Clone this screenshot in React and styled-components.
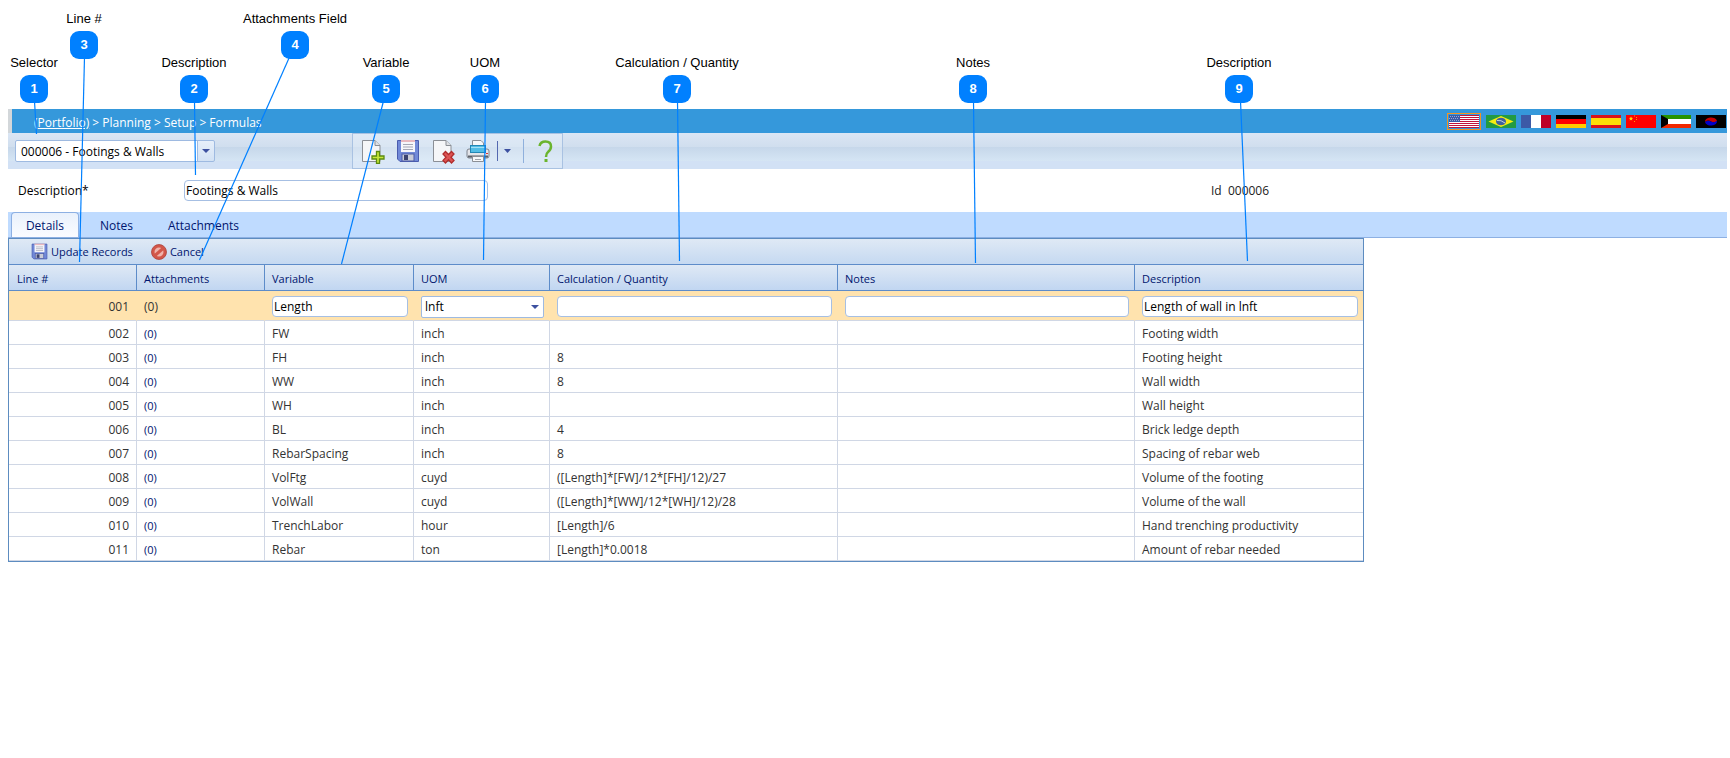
import React from "react";
import styled, { createGlobalStyle } from "styled-components";

const GlobalStyle = createGlobalStyle`
  * {
    box-sizing: border-box;
  }

  body {
    margin: 0;
    background: #fff;
    color: #000;
    font-family: "Open Sans", "Noto Sans", sans-serif;
    font-size: 12px;
  }

  input, select, button {
    font: inherit;
    color: inherit;
  }
`;

const Page = styled.div`
  position: relative;
  padding: 109px 3px 40px 8px;
`;

const TitleBar = styled.header`
  display: flex;
  align-items: center;
  justify-content: space-between;
  height: 24px;
  padding: 0 1px 0 22px;
  border-left: 4px solid #d3d7da;
  background: #3598db;
  color: #fff;
`;

const Breadcrumb = styled.nav`
  padding-top: 2px;

  a {
    color: #fff;
  }
`;

const Flags = styled.div`
  display: flex;
  align-items: center;
  gap: 5px;
`;

const FlagButton = styled.button`
  display: block;
  padding: ${(p) => (p.$active ? "1px" : "0")};
  border: ${(p) => (p.$active ? "1px solid #f7931e" : "0")};
  background: none;
  cursor: pointer;

  svg {
    display: block;
  }
`;

const ToolBar = styled.div`
  display: flex;
  align-items: flex-start;
  height: 36px;
  padding-left: 7px;
  background: linear-gradient(
    #dbe6f4 0,
    #d0deee 14px,
    #c6d7ea 14px,
    #d5e5f4 28px,
    #d2e1f5 28px,
    #d2e1f5 100%
  );
`;

const SelectWrap = styled.div`
  position: relative;
  width: ${(p) => p.$width || "100%"};
  margin-top: ${(p) => p.$top || "0"};

  &::after {
    content: "";
    position: absolute;
    top: 9px;
    right: 5px;
    border: 4px solid transparent;
    border-top-color: #3c50a0;
    border-bottom: 0;
    pointer-events: none;
  }
`;

const Select = styled.select`
  display: block;
  width: 100%;
  height: 22px;
  padding: 0 20px 0 ${(p) => (p.$split ? "5px" : "3px")};
  border: 1px solid #9ebae1;
  border-radius: 2px;
  appearance: none;
  background: ${(p) =>
    p.$split
      ? "linear-gradient(#9ebae1, #9ebae1) right 16px top 0 / 1px 100% no-repeat, linear-gradient(#e6effa, #d3e2f4) right / 16px 100% no-repeat, #fff"
      : "#fff"};
`;

const ToolGroup = styled.div`
  display: flex;
  align-items: center;
  height: 36px;
  margin-left: 137px;
  padding: 0 8px;
  border: 1px solid #a9c2e2;
  background: rgba(235, 243, 252, 0.35);
`;

const IconButton = styled.button`
  display: flex;
  padding: 0;
  margin-right: ${(p) => p.$gap || "11px"};
  border: 0;
  background: none;
  cursor: pointer;
`;

const Divider = styled.span`
  width: 1px;
  height: ${(p) => (p.$light ? "24px" : "20px")};
  margin-right: ${(p) => (p.$light ? "14px" : "5px")};
  background: ${(p) => (p.$light ? "#8fb0dc" : "#5468b0")};
`;

const FormRow = styled.div`
  display: flex;
  align-items: center;
  height: 43px;
  padding-left: 10px;
`;

const FormLabel = styled.label`
  width: 166px;
`;

const Input = styled.input`
  display: block;
  width: ${(p) => p.$width || "100%"};
  height: 21px;
  padding: 0 1px;
  border: 1px solid #a6bfe3;
  border-radius: 4px;
  background: #fff;
`;

const RecordId = styled.div`
  margin-left: 723px;
  color: #222;
  white-space: pre;
`;

const TabStrip = styled.div`
  display: flex;
  align-items: flex-end;
  height: 26px;
  padding-left: 3px;
  border-bottom: 1px solid #8db0e3;
  background: #bfdbff;
`;

const Tab = styled.button`
  height: 25px;
  padding: 1px 0 0;
  width: ${(p) => p.$width};
  border: 1px solid ${(p) => (p.$active ? "#8db0e3" : "transparent")};
  border-bottom: 0;
  border-radius: 4px 4px 0 0;
  background: ${(p) => (p.$active ? "linear-gradient(#e9f1fc, #fafcff)" : "none")};
  color: #00156e;
  cursor: pointer;
`;

const Grid = styled.div`
  width: fit-content;
  border: 1px solid #5d8cc0;
`;

const CommandRow = styled.div`
  display: flex;
  align-items: center;
  height: 25px;
  padding-left: 22px;
  gap: 18px;
  background: linear-gradient(#dfe9f5, #c5d9f1);
`;

const CommandButton = styled.button`
  display: flex;
  align-items: center;
  gap: 3px;
  padding: 0;
  border: 0;
  background: none;
  color: #00156e;
  font-size: 11px;
  cursor: pointer;
`;

const Table = styled.table`
  width: 1354px;
  table-layout: fixed;
  border-collapse: separate;
  border-spacing: 0;

  th {
    height: 27px;
    padding: 2px 0 0 7px;
    border: solid #5d8cc9;
    border-width: 1px 1px 1px 0;
    background: linear-gradient(#dfe9f5, #c1d6f1);
    color: #00156e;
    font-size: 11px;
    font-weight: 400;
    text-align: left;
  }

  th:first-child {
    padding-left: 8px;
  }

  td {
    height: 24px;
    padding: 2px 0 0 7px;
    border: solid #d0d7e5;
    border-width: 0 1px 1px 0;
    color: #333;
    white-space: nowrap;
  }

  td:first-child {
    padding-right: 7px;
    text-align: right;
  }

  th:last-child,
  td:last-child {
    border-right: 0;
  }
`;

const EditRow = styled.tr`
  && td {
    height: 30px;
    padding-right: 5px;
    border-right-color: #ffe3ae;
    background: #ffe3ae;
  }

  && td:first-child {
    padding-right: 7px;
  }

  input, select {
    color: #000;
  }
`;

const AttachLink = styled.a`
  color: #00156e;
  font-size: 11px;
  text-decoration: none;
`;

const Overlay = styled.div`
  position: absolute;
  top: 0;
  left: 0;
  pointer-events: none;
`;

const Lines = styled.svg`
  position: absolute;
  top: 0;
  left: 0;
`;

const Callout = styled.div`
  position: absolute;
  display: flex;
  flex-direction: column;
  align-items: center;
  width: 160px;
  gap: 4px;
  font-family: "Liberation Sans", Arial, sans-serif;
  font-size: 13px;
  line-height: 16px;
`;

const Badge = styled.span`
  display: flex;
  align-items: center;
  justify-content: center;
  width: 28px;
  height: 28px;
  margin-left: ${(p) => p.$shift * 2}px;
  border-radius: 9px;
  background: #0080ff;
  color: #fff;
  font-weight: 700;
`;

const callouts = [
  { n: 1, label: "Selector", x: 34, y: 55, end: [36, 134] },
  { n: 2, label: "Description", x: 194, y: 55, end: [195, 175] },
  { n: 3, label: "Line #", x: 84, y: 11, end: [79, 262] },
  { n: 4, label: "Attachments Field", x: 295, y: 11, from: 289, end: [199, 260] },
  { n: 5, label: "Variable", x: 386, y: 55, from: 383, end: [341, 264] },
  { n: 6, label: "UOM", x: 485, y: 55, end: [483, 260] },
  { n: 7, label: "Calculation / Quantity", x: 677, y: 55, end: [679, 261] },
  { n: 8, label: "Notes", x: 973, y: 55, end: [975, 263] },
  { n: 9, label: "Description", x: 1239, y: 55, from: 1240, end: [1247, 261] },
];

const columns = [
  { title: "Line #", width: 128 },
  { title: "Attachments", width: 128 },
  { title: "Variable", width: 149 },
  { title: "UOM", width: 136 },
  { title: "Calculation / Quantity", width: 288 },
  { title: "Notes", width: 297 },
  { title: "Description", width: 228 },
];

const rows = [
  ["002", "FW", "inch", "", "Footing width"],
  ["003", "FH", "inch", "8", "Footing height"],
  ["004", "WW", "inch", "8", "Wall width"],
  ["005", "WH", "inch", "", "Wall height"],
  ["006", "BL", "inch", "4", "Brick ledge depth"],
  ["007", "RebarSpacing", "inch", "8", "Spacing of rebar web"],
  ["008", "VolFtg", "cuyd", "([Length]*[FW]/12*[FH]/12)/27", "Volume of the footing"],
  ["009", "VolWall", "cuyd", "([Length]*[WW]/12*[WH]/12)/28", "Volume of the wall"],
  ["010", "TrenchLabor", "hour", "[Length]/6", "Hand trenching productivity"],
  ["011", "Rebar", "ton", "[Length]*0.0018", "Amount of rebar needed"],
];

const flags = [
  {
    name: "English",
    art: (
      <>
        <rect width="30" height="13" fill="#fff" />
        {[0, 2, 4, 6, 8, 10, 12].map((y) => (
          <rect key={y} y={y} width="30" height="1" fill="#c0143c" />
        ))}
        <rect width="11" height="7" fill="#3a5ba8" />
        <path
          d="M1 1.5h10M0 3.5h10M1 5.5h10"
          stroke="#93a9d6"
          strokeDasharray="1 1"
        />
      </>
    ),
  },
  {
    name: "Português",
    art: (
      <>
        <rect width="30" height="13" fill="#229a44" />
        <path d="M2.5 6.5 15 1l12.5 5.5L15 12z" fill="#f7ec13" />
        <ellipse cx="15" cy="6.5" rx="5" ry="3.8" fill="#41609c" />
        <path d="M11 5.5q4-.8 8 2.5" stroke="#c3d3e0" fill="none" />
      </>
    ),
  },
  {
    name: "Français",
    art: (
      <>
        <rect width="10" height="13" fill="#3c5aa6" />
        <rect x="10" width="10" height="13" fill="#fff" />
        <rect x="20" width="10" height="13" fill="#be0027" />
      </>
    ),
  },
  {
    name: "Deutsch",
    art: (
      <>
        <rect width="30" height="4" fill="#000" />
        <rect y="4" width="30" height="5" fill="#f00" />
        <rect y="9" width="30" height="4" fill="#fc0" />
      </>
    ),
  },
  {
    name: "Español",
    art: (
      <>
        <rect width="30" height="13" fill="#da121a" />
        <rect y="3" width="30" height="7" fill="#fcdd09" />
      </>
    ),
  },
  {
    name: "中文",
    art: (
      <>
        <rect width="30" height="13" fill="#fe0000" />
        <path d="M5 1.5l.6 1.3 1.4.2-1 1 .2 1.5-1.2-.7-1.3.7.3-1.5-1-1 1.4-.2z" fill="#ffde00" />
        <path d="M8 .5h1v1H8zM10 2h1v1h-1zM10 4h1v1h-1zM8 6h1v1H8z" fill="#ff9a00" />
      </>
    ),
  },
  {
    name: "العربية",
    art: (
      <>
        <rect width="30" height="4" fill="#279300" />
        <rect y="4" width="30" height="5" fill="#fff" />
        <rect y="9" width="30" height="4" fill="#f02800" />
        <path d="M0 0l7 4v5l-7 4z" fill="#000" />
      </>
    ),
  },
  {
    name: "한국어",
    art: (
      <>
        <rect width="30" height="13" fill="#000" />
        <path d="M9 7a6 4 0 0 1 12-1q-3 2.5-6 .5T9 7z" fill="#c60000" />
        <path d="M21 6a6 4 0 0 1-12 1q3-2 6-.5T21 6z" fill="#0000c8" />
      </>
    ),
  },
];

function PageShape() {
  return (
    <>
      <path d="M1.5 1.5H14l5 5v16H1.5z" fill="#f5f6f8" stroke="#8b8f96" />
      <path d="M14 1.5v5h5" fill="#dfe1e5" stroke="#8b8f96" />
    </>
  );
}

function NewIcon() {
  return (
    <svg width="24" height="25" viewBox="0 0 24 25">
      <PageShape />
      <path
        d="M15.5 12.5h3v4.500h4.500v3h-4.500v4.500h-3V20H11v-3h4.500z"
        fill="#c6e83a"
        stroke="#5b8a10"
        strokeWidth="1.300"
      />
    </svg>
  );
}

function DeleteIcon() {
  return (
    <svg width="24" height="25" viewBox="-1 0 24 25">
      <PageShape />
      <path
        d="M13.500 12.500l3 3 3-3 2.500 2.500-3 3.200 3 3.200-2.500 2.600-3-3.200-3 3.200-2.500-2.600 3-3.200-3-3.200z"
        fill="#dc5454"
        stroke="#b02c2c"
        strokeWidth="1.300"
      />
    </svg>
  );
}

function SaveIcon({ size = 24 }) {
  return (
    <svg width={size} height={size} viewBox="0 0 24 24">
      <path d="M1.5 1.5h21v21H4L1.5 20z" fill="#7189d8" stroke="#4a5cae" />
      <rect x="5" y="2" width="14" height="11" fill="#f6f6fa" />
      <rect x="5" y="1" width="14" height="2" fill="#e8b8bf" />
      <path d="M7 5.5h10M7 8h10M7 10.5h10" stroke="#a4a6b4" />
      <rect x="6" y="15" width="12" height="7" fill="#c9ccd8" stroke="#4a5aa6" />
      <rect x="8" y="16" width="4" height="5" fill="#3b4370" />
    </svg>
  );
}

function PrintIcon() {
  return (
    <svg width="24" height="24" viewBox="0 0 24 24">
      <path d="M6.5 9V1.5H15l2.5 2.5v5" fill="#f7f8fa" stroke="#8b8f96" />
      <rect x="1" y="10" width="22" height="9" rx="2" fill="#e3e5ea" stroke="#7d828c" />
      <path d="M2 17.5h20" stroke="#5c6068" strokeWidth="2" />
      <rect x="4.5" y="6.5" width="15" height="7" fill="#52bde6" stroke="#2387b5" />
      <path d="M5 8.5h14" stroke="#a4e0f5" />
      <path d="M6.5 17.5h11v5h-11z" fill="#f7f8fa" stroke="#8b8f96" />
      <path d="M9 20.5h6" stroke="#a0a4ac" />
      <rect x="20" y="14" width="2" height="1" fill="#e03030" />
    </svg>
  );
}

function HelpIcon() {
  return (
    <svg width="16" height="24" viewBox="4 0 16 24">
      <path
        d="M5.5 7Q6.500 2.500 11.500 2.500q5.500 0 5.500 5 0 3-3 5.500Q12 14.500 12 18"
        fill="none"
        stroke="#6ab42d"
        strokeWidth="2.500"
      />
      <rect x="10.500" y="20" width="3" height="3" fill="#6ab42d" />
    </svg>
  );
}

function CancelIcon() {
  return (
    <svg width="16" height="16" viewBox="0 0 16 16">
      <circle cx="8" cy="8" r="6" fill="#f0b4ac" stroke="#d2574a" strokeWidth="3" />
      <circle cx="8" cy="8" r="7.5" fill="none" stroke="#a83a30" strokeWidth=".7" />
      <path d="M4 11.5 12 4.5" stroke="#d2574a" strokeWidth="3" />
    </svg>
  );
}

function ArrowIcon() {
  return (
    <svg width="9" height="6" viewBox="0 0 9 6">
      <path d="M1 1h7L4.5 5z" fill="#3c50a0" />
    </svg>
  );
}

function Annotations() {
  return (
    <Overlay>
      <Lines width="1400" height="300" stroke="#0080ff" strokeWidth="1.200">
        {callouts.map((c) => (
          <line
            key={c.n}
            x1={(c.from || c.x) + 0.5}
            y1={c.y + 46}
            x2={c.end[0] + 0.5}
            y2={c.end[1]}
          />
        ))}
      </Lines>
      {callouts.map((c) => (
        <Callout key={c.n} style={{ left: c.x - 80, top: c.y }}>
          {c.label}
          <Badge $shift={0}>{c.n}</Badge>
        </Callout>
      ))}
    </Overlay>
  );
}

function FormulaGrid() {
  return (
    <Grid>
      <CommandRow>
        <CommandButton>
          <SaveIcon size={17} />
          Update Records
        </CommandButton>
        <CommandButton>
          <CancelIcon />
          Cancel
        </CommandButton>
      </CommandRow>
      <Table>
        <colgroup>
          {columns.map((c) => (
            <col key={c.title} style={{ width: c.width }} />
          ))}
        </colgroup>
        <thead>
          <tr>
            {columns.map((c) => (
              <th key={c.title}>{c.title}</th>
            ))}
          </tr>
        </thead>
        <tbody>
          <EditRow>
            <td>001</td>
            <td>(0)</td>
            <td>
              <Input aria-label="Variable" defaultValue="Length" />
            </td>
            <td>
              <SelectWrap>
                <Select aria-label="UOM" defaultValue="lnft">
                  <option>lnft</option>
                  <option>inch</option>
                  <option>cuyd</option>
                  <option>hour</option>
                  <option>ton</option>
                </Select>
              </SelectWrap>
            </td>
            <td>
              <Input aria-label="Calculation / Quantity" />
            </td>
            <td>
              <Input aria-label="Notes" />
            </td>
            <td>
              <Input aria-label="Description" defaultValue="Length of wall in lnft" />
            </td>
          </EditRow>
          {rows.map(([line, variable, uom, calc, description]) => (
            <tr key={line}>
              <td>{line}</td>
              <td>
                <AttachLink href="#attachments">(0)</AttachLink>
              </td>
              <td>{variable}</td>
              <td>{uom}</td>
              <td>{calc}</td>
              <td></td>
              <td>{description}</td>
            </tr>
          ))}
        </tbody>
      </Table>
    </Grid>
  );
}

function App() {
  return (
    <Page>
      <GlobalStyle />
      <TitleBar>
        <Breadcrumb>
          <a href="#portfolio">(Portfolio)</a> &gt; Planning &gt; Setup &gt; Formulas
        </Breadcrumb>
        <Flags>
          {flags.map((flag, i) => (
            <FlagButton key={flag.name} $active={i === 0} aria-label={flag.name}>
              <svg width="30" height="13" viewBox="0 0 30 13">
                {flag.art}
              </svg>
            </FlagButton>
          ))}
        </Flags>
      </TitleBar>

      <ToolBar>
        <SelectWrap $width="200px" $top="7px">
          <Select $split aria-label="Selector">
            <option>000006 - Footings &amp; Walls</option>
          </Select>
        </SelectWrap>
        <ToolGroup>
          <IconButton aria-label="New">
            <NewIcon />
          </IconButton>
          <IconButton aria-label="Save">
            <SaveIcon />
          </IconButton>
          <IconButton aria-label="Delete">
            <DeleteIcon />
          </IconButton>
          <IconButton aria-label="Print" $gap="7px">
            <PrintIcon />
          </IconButton>
          <Divider />
          <IconButton aria-label="Print options">
            <ArrowIcon />
          </IconButton>
          <Divider $light />
          <IconButton aria-label="Help" $gap="0">
            <HelpIcon />
          </IconButton>
        </ToolGroup>
      </ToolBar>

      <FormRow>
        <FormLabel htmlFor="description">Description*</FormLabel>
        <Input id="description" $width="304px" defaultValue="Footings &amp; Walls" />
        <RecordId>Id  000006</RecordId>
      </FormRow>

      <TabStrip role="tablist">
        <Tab role="tab" $active $width="68px">
          Details
        </Tab>
        <Tab role="tab" $width="75px">
          Notes
        </Tab>
        <Tab role="tab" $width="99px">
          Attachments
        </Tab>
      </TabStrip>

      <FormulaGrid />
      <Annotations />
    </Page>
  );
}

export default App;
